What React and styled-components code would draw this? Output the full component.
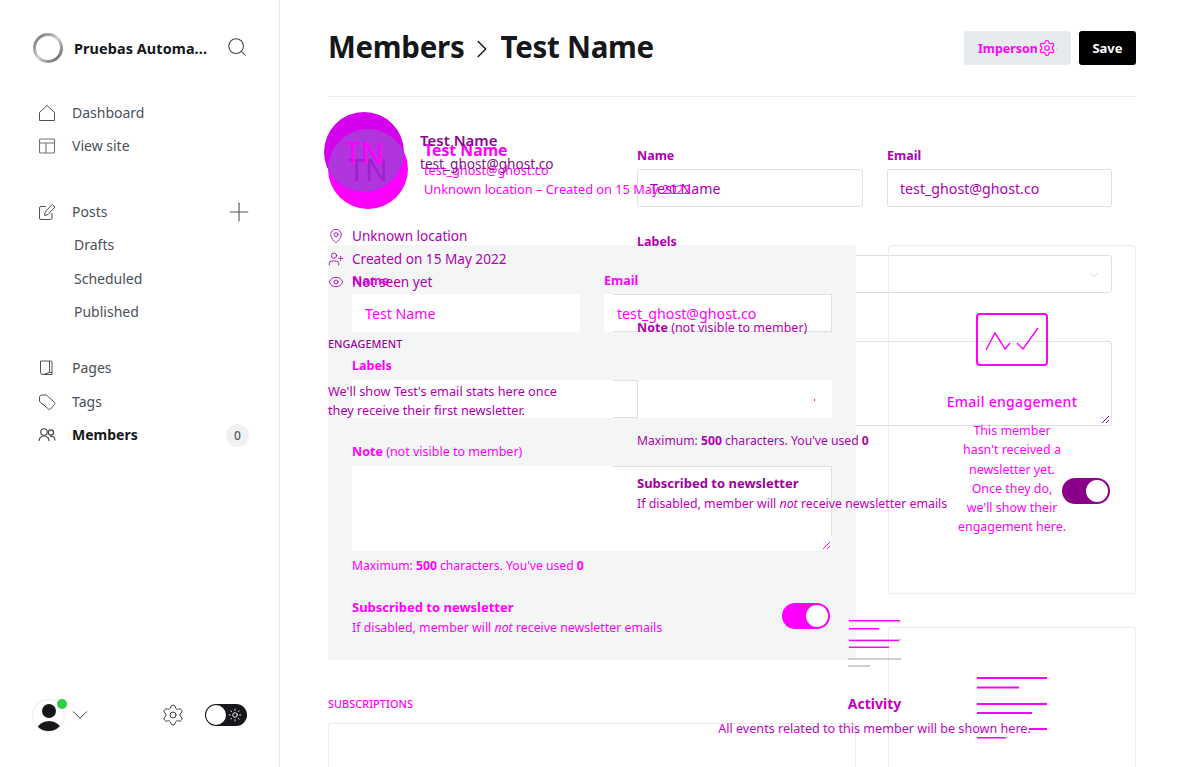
import React from "react";
import styled, { createGlobalStyle } from "styled-components";
import { Search, Plus, ChevronDown, ChevronRight, Settings, Sun, MapPin, UserPlus, Eye } from "lucide-react";

const FONT = `"Noto Sans", "Open Sans", "Liberation Sans", sans-serif`;

const Global = createGlobalStyle`
  html, body { margin: 0; padding: 0; height: 100%; overflow: hidden; background: #fff; }
  body { font-family: ${FONT}; color: #15171a; }
  * { box-sizing: border-box; }
`;

const Page = styled.div`display: flex; width: 1184px; height: 767px; overflow: hidden; background: #fff;`;

/* ---------- sidebar ---------- */
const Sidebar = styled.aside`
  flex: 0 0 280px; height: 100%; border-right: 1px solid #e6e9eb;
  padding: 32px 31px 36px 32px; display: flex; flex-direction: column;
`;
const Brand = styled.div`display: flex; align-items: center; height: 32px; gap: 10px;`;
const BrandName = styled.div`
  flex: 1; font-size: 14.4px; font-weight: 700; color: #15171a; letter-spacing: .1px; white-space: nowrap;
`;
const BrandSearch = styled.span`display: flex; color: #394047; margin: -2px 0 0 0;`;
const NavGroup = styled.nav`display: flex; flex-direction: column; margin-top: ${p => p.$gap}px;`;
const NavRow = styled.div`
  display: flex; align-items: center; height: 33.5px; padding-left: ${p => p.$sub ? 42 : 6}px; gap: 16px;
  font-size: 14px; font-weight: ${p => p.$active ? 700 : 400}; color: ${p => p.$active ? "#15171a" : "#4b5158"};
  svg { flex: none; }
`;
const NavLabel = styled.span`flex: 1; line-height: 20px;`;
const Count = styled.span`
  width: 23px; height: 23px; border-radius: 50%; background: #eff1f3; color: #525b64; margin-right: -1px;
  display: flex; align-items: center; justify-content: center; font-size: 12px; font-weight: 500;
`;
const PlusMark = styled.span`display: flex; color: #4b5158; margin-right: -6px;`;
const Foot = styled.div`margin-top: auto; display: flex; align-items: center; height: 32px;`;
const UserAvatar = styled.div`
  position: relative; width: 33px; height: 33px; border-radius: 50%; border: 1px solid #ececec; overflow: hidden; background: #fff;
`;
const UserWrap = styled.div`position: relative; width: 33px; height: 33px;`;
const Online = styled.span`
  position: absolute; right: -2px; top: 0; width: 10px; height: 10px; border-radius: 50%; background: #30cf43;
`;
const FootChevron = styled.span`display: flex; color: #394047; margin-left: 2px; flex: 1;`;
const FootGear = styled.span`display: flex; color: #394047; margin-right: 20px;`;
const Night = styled.div`
  width: 42px; height: 22px; border-radius: 11px; background: #15171a; display: flex; align-items: center;
  justify-content: space-between; padding: 0 5px 0 1px; color: #fff; margin-right: 1px;
`;
const NightKnob = styled.span`width: 20px; height: 20px; border-radius: 50%; background: #fff;`;

/* ---------- main ---------- */
const Main = styled.main`flex: 1; padding: 0 48px; height: 100%; overflow: hidden; min-width: 0;`;
const Header = styled.header`
  height: 97px; border-bottom: 1px solid #eceef0; display: flex; align-items: center; justify-content: space-between;
`;
const Crumbs = styled.div`
  display: flex; align-items: center; font-size: 29.5px; font-weight: 700; color: #15171a; margin: -4px 0 0 0; letter-spacing: -.28px;
  svg { margin: 5px 3px 0 3px; color: #15171a; }
`;
const Actions = styled.div`display: flex; gap: 8px;`;
const GhostButton = styled.button`
  position: relative; width: 107px; height: 34px; border: 0; border-radius: 3px; background: #e8ebee; color: #f0f;
  font: 700 12.4px ${FONT}; text-align: left; padding: 0 0 0 14px; white-space: nowrap;
`;
const GearOver = styled.span`
  position: absolute; left: 73px; top: 7px; width: 20px; height: 20px; display: flex; align-items: center; justify-content: center;
  color: #f0f; background: #e8ebee;
`;
const SaveButton = styled.button`
  width: 57px; height: 34px; border: 0; border-radius: 3px; background: #000; color: #fff; font: 700 13px ${FONT}; padding: 0;
`;

const Stack = styled.div`display: grid; > * { grid-area: 1 / 1; }`;

/* layer drawn with the darker tone */
const LayerA = styled.div`display: flex; align-items: flex-start; padding-top: 15px; min-width: 0;`;
const AsideA = styled.div`
  flex: 0 0 309px; z-index: 2; position: relative; display: flex; flex-direction: column;
`;
const IdA = styled.div`display: flex; margin-left: -4px; gap: 16px;`;
const AvatarA = styled.div`
  position: relative; flex: none; width: 80px; height: 80px; border-radius: 50%; overflow: hidden; background: #d400ee;
  display: flex; align-items: center; justify-content: center; color: #f0f; font-size: 30px;
`;
const AvatarOverlap = styled.div`
  position: absolute; left: 4px; top: 17px; width: 80px; height: 80px; border-radius: 50%; background: #b035dd;
  display: flex; align-items: center; justify-content: center; color: #a020d0; font-size: 30px;
`;
const AvatarTop = styled.span`position: relative; z-index: 1;`;
const IdTextA = styled.div`display: flex; flex-direction: column; padding-top: 18px; white-space: nowrap;`;
const NameA = styled.div`font-size: 15px; font-weight: 600; line-height: 20px; color: #8b0a8b; padding-bottom: 4px;`;
const MailA = styled.div`font-size: 13.6px; line-height: 20px; color: #7a1a7a;`;
const Facts = styled.div`display: flex; flex-direction: column; margin-top: 32px;`;
const Fact = styled.div`
  display: flex; align-items: center; gap: 8px; height: 23px; font-size: 13.6px; color: #b000b0;
  svg { flex: none; }
`;
const SectionHead = styled.div`
  font-size: 10.8px; font-weight: 500; text-transform: uppercase; color: ${p => p.$c}; letter-spacing: .1px; line-height: 14px;
  margin-top: ${p => p.$mt || 0}px;
`;
const EngageNote = styled.div`font-size: 12.7px; line-height: 19px; color: #b000b0; margin-top: 31px;`;

const FormA = styled.div`flex: 0 0 475px; display: flex; flex-direction: column; padding-top: 35px;`;
const Cols = styled.div`display: grid; grid-template-columns: ${p => p.$cols}; gap: 24px;`;
const Field = styled.div`display: flex; flex-direction: column; margin-top: ${p => p.$mt || 0}px;`;
const LabelA = styled.label`
  z-index: 2; font-size: 12.5px; font-weight: 700; line-height: 18px; color: #b000b0; margin-bottom: 4px;
  span { font-weight: 400; }
`;
const BoxA = styled.div`
  position: relative; z-index: 0; height: ${p => p.$h || 38}px; background: #fff; border: 1px solid #dde1e5; border-radius: 3px;
  padding: 0 12px; display: flex; align-items: center; font-size: 14.2px; color: #b000b0;
`;
const SelectArrow = styled.span`position: absolute; right: 10px; top: 12px; display: flex; color: #bdbdbd;`;
const Grip = styled.svg`position: absolute; right: 1px; bottom: 1px;`;
const HintA = styled.div`
  z-index: 2; font-size: 12.15px; line-height: 18px; color: #b000b0; margin-top: 6px; b { font-weight: 700; }
`;
const ToggleRowA = styled.div`
  z-index: 2; display: flex; align-items: center; justify-content: space-between; padding-right: 2px; margin-top: 24px; white-space: nowrap;
`;
const ToggleText = styled.div`display: flex; flex-direction: column;`;
const ToggleTitle = styled.div`font-size: 13px; font-weight: 700; line-height: 18px; color: ${p => p.$c};`;
const ToggleSub = styled.div`font-size: 12.35px; line-height: 18px; margin-top: 3px; color: ${p => p.$c}; i { font-style: italic; }`;
const ToggleSlot = styled.div`margin-top: ${p => p.$mt}px;`;
const Toggle = styled.div`
  flex: none; width: 48px; height: 26px; border-radius: 13px; background: ${p => p.$c}; display: flex; align-items: center;
  justify-content: flex-end; padding-right: 2px;
`;
const Knob = styled.span`width: 22px; height: 22px; border-radius: 50%; background: #fff;`;

const ActivityA = styled.div`
  z-index: 2; display: flex; flex-direction: column; align-items: center; margin-top: 107px;
`;
const ActivityTitle = styled.div`font-size: 14px; font-weight: 700; line-height: 20px; color: #c000c8; margin-top: 27px;`;
const ActivityText = styled.div`font-size: 12.6px; line-height: 20px; color: #c800c8; margin-top: 5px; white-space: nowrap;`;

/* layer drawn in full magenta */
const LayerB = styled.div`
  z-index: 1; display: flex; gap: 32px; padding-top: 32px; align-items: flex-start; color: #f0f; pointer-events: none; min-width: 0;
`;
const MainB = styled.div`flex: 0 0 528px; display: flex; flex-direction: column;`;
const IdB = styled.div`display: flex; gap: 16px; height: 80px;`;
const AvatarB = styled.div`flex: none; width: 80px; height: 80px; border-radius: 50%; background: #f0f;`;
const IdTextB = styled.div`display: flex; flex-direction: column; padding-top: 10px; white-space: nowrap;`;
const NameB = styled.div`font-size: 15.8px; font-weight: 700; line-height: 22px;`;
const MailB = styled.div`font-size: 12.7px; line-height: 18px;`;
const MetaB = styled.div`font-size: 12.8px; line-height: 20px; margin-top: 0;`;

const Panel = styled.div`
  margin-top: 36px; height: 415px; background: #f4f6f6; border-radius: 3px; padding: 27px 24px 0; display: flex; flex-direction: column;
`;
const LabelB = styled.label`
  font-size: 12.5px; font-weight: 700; line-height: 18px; margin-bottom: ${p => p.$mb || 5}px;
  span { font-weight: 400; }
`;
/* white boxes: only the stretch named by the props keeps a visible edge */
const BoxB = styled.div`
  position: relative; height: ${p => p.$h || 38}px; background-color: #fff; border-radius: 2px; padding: 0 13px;
  display: flex; align-items: center; font-size: 14.2px; color: #f0f;
`;
const Edge = styled.span`
  position: absolute; left: ${p => p.$l}px; top: ${p => p.$t}px; width: ${p => p.$w}px; height: ${p => p.$hh}px; background: #dde1e5;
`;
const SpotArrow = styled.span`position: absolute; right: 17px; top: 19px; width: 1px; height: 2px; background: #f0f;`;
const HintB = styled.div`font-size: 12.15px; line-height: 18px; margin-top: 6px; b { font-weight: 700; }`;
const ToggleRowB = styled.div`
  display: flex; align-items: center; justify-content: space-between; padding-right: 2px; margin-top: 23px; white-space: nowrap;
`;
const SubsHead = styled.div`margin-top: 37px;`;
const SubsCard = styled.div`margin-top: 12px; height: 120px; border: 1px solid #ececec; border-radius: 3px 3px 0 0;`;

const SideB = styled.div`flex: 0 0 248px; display: flex; flex-direction: column; gap: 33px; padding-top: 116px;`;
const Card = styled.div`
  flex: none; height: ${p => p.$h}px; border: 1px solid #ececec; border-radius: 3px; display: flex; flex-direction: column; align-items: center;
  padding-top: ${p => p.$pt}px;
`;
const EngageTitle = styled.div`font-size: 14px; font-weight: 500; line-height: 20px; margin-top: 26px; letter-spacing: .3px;`;
const EngageBody = styled.div`font-size: 12.45px; line-height: 19.3px; text-align: center; margin-top: 9px;`;

const House = () => (
  <svg width="18" height="18" viewBox="0 0 18 18" fill="none" stroke="#4b5158" strokeWidth="1"><path d="M1.5 8.5 9 1.5l7.5 7v8h-15z" strokeLinejoin="round"/></svg>
);
const Layout = () => (
  <svg width="18" height="18" viewBox="0 0 18 18" fill="none" stroke="#6b7580" strokeWidth="1.1"><rect x="1.5" y="2" width="15" height="14" rx="1"/><path d="M1.5 6h15M8 6v10"/></svg>
);
const Compose = () => (
  <svg width="18" height="18" viewBox="0 0 18 18" fill="none" stroke="#4b5158" strokeWidth="1"><path d="M8 3.5H3A1.5 1.5 0 0 0 1.500 5v10A1.500 1.500 0 0 0 3 16.500h9.500A1.500 1.500 0 0 0 14 15v-5"/><path d="M14 1.500 17 4l-7 7.500-3.500 1 .8-3.500z" strokeLinejoin="round"/></svg>
);
const Book = () => (
  <svg width="18" height="18" viewBox="0 0 18 18" fill="none" stroke="#4b5158" strokeWidth="1"><path d="M2.500 2h10.500a1 1 0 0 1 1 1v12.500H5a2.500 2.500 0 0 1-2.500-2.500z" strokeLinejoin="round"/><path d="M11.500 2v11.500H14M5 15.500l6.500-2"/></svg>
);
const Tag = () => (
  <svg width="18" height="18" viewBox="0 0 18 18" fill="none" stroke="#4b5158" strokeWidth="1"><path d="M1.500 3.500 3 2h5.500l8 7.500a1.500 1.500 0 0 1 0 2l-4 4.500a1.500 1.500 0 0 1-2 0L1.500 8.500z" strokeLinejoin="round"/></svg>
);
const People = () => (
  <svg width="18" height="18" viewBox="0 0 18 18" fill="none" stroke="#394047" strokeWidth="1.1"><circle cx="6" cy="6" r="3.300"/><path d="M1 15c0-3 2-5 5-5s5 2 5 5"/><circle cx="13" cy="6.500" r="2.600"/><path d="M12 10.300c3-.5 5 1.500 5 4.200"/></svg>
);
const Ring = () => (
  <svg width="32" height="32" viewBox="0 0 32 32" fill="none">
    <defs><linearGradient id="rg" x1="0" y1="0" x2="1" y2="1"><stop offset="0" stopColor="#6f6f6f"/><stop offset=".5" stopColor="#cfcfcf"/><stop offset="1" stopColor="#5a5a5a"/></linearGradient></defs>
    <circle cx="16" cy="16" r="13.500" stroke="url(#rg)" strokeWidth="3"/>
  </svg>
);
const Person = () => (
  <svg width="31" height="31" viewBox="0 0 31 31"><circle cx="16" cy="11" r="7" fill="#15171a"/><ellipse cx="16" cy="30" rx="12" ry="9" fill="#15171a"/></svg>
);
const GripMark = ({ c }) => (
  <Grip width="9" height="9" viewBox="0 0 9 9" stroke={c} strokeWidth="1"><path d="M1 8 8 1M5 8l3-3"/></Grip>
);
const Envelope = () => (
  <svg width="72" height="53" viewBox="0 0 72 53" fill="none" stroke="#f0f">
    <rect x="1" y="1" width="70" height="51" rx="3" strokeWidth="2"/>
    <path d="M10 37 19 20l7 11M26 31l3 5 5-6M41 30l6 6 15-21" strokeWidth="1.400"/>
  </svg>
);
const LinesB = () => (
  <svg width="70" height="62" viewBox="0 0 70 62" fill="#f0f">
    <rect x="0" y="0" width="70" height="2"/><rect x="0" y="9.500" width="42" height="2"/>
    <rect x="0" y="26" width="70" height="2"/><rect x="0" y="35" width="55" height="2"/>
    <rect x="52" y="51" width="18" height="2"/><rect x="0" y="60" width="29" height="1.500"/>
  </svg>
);
const LinesA = () => (
  <svg width="53" height="47" viewBox="0 0 53 47">
    <rect x="1" y="1" width="52" height="1.500" fill="#d0d0d0"/><rect x="1" y="0" width="51" height="1.200" fill="#f0f"/>
    <rect x="1" y="8" width="30" height="1.500" fill="#f0f"/>
    <rect x="0" y="19" width="53" height="1.500" fill="#c9c9c9"/><rect x="1" y="20" width="50" height="1.200" fill="#f0f"/>
    <rect x="1" y="26.500" width="40" height="1.500" fill="#f0f"/>
    <rect x="0" y="38" width="53" height="2" fill="#cfcfcf"/><rect x="0" y="45" width="22" height="2" fill="#cfcfcf"/>
  </svg>
);

const navTop = [["Dashboard", <House key="a" />], ["View site", <Layout key="b" />]];
const navBottom = [["Pages", <Book key="a" />], ["Tags", <Tag key="b" />]];

export default function App() {
  return (
    <>
      <Global />
      <Page>
        <Sidebar>
          <Brand>
            <Ring />
            <BrandName>Pruebas Automa...</BrandName>
            <BrandSearch><Search size={22} strokeWidth={1.1} /></BrandSearch>
          </Brand>
          <NavGroup $gap={32}>
            {navTop.map(([t, i]) => <NavRow key={t}>{i}<NavLabel>{t}</NavLabel></NavRow>)}
          </NavGroup>
          <NavGroup $gap={32}>
            <NavRow><Compose /><NavLabel>Posts</NavLabel><PlusMark><Plus size={30} strokeWidth={0.9} /></PlusMark></NavRow>
            {["Drafts", "Scheduled", "Published"].map(t => <NavRow $sub key={t}><NavLabel>{t}</NavLabel></NavRow>)}
          </NavGroup>
          <NavGroup $gap={22.6}>
            {navBottom.map(([t, i]) => <NavRow key={t}>{i}<NavLabel>{t}</NavLabel></NavRow>)}
            <NavRow $active><People /><NavLabel>Members</NavLabel><Count>0</Count></NavRow>
          </NavGroup>
          <Foot>
            <UserWrap>
              <UserAvatar><Person /></UserAvatar>
              <Online />
            </UserWrap>
            <FootChevron><ChevronDown size={26} strokeWidth={0.9} /></FootChevron>
            <FootGear><Settings size={24} strokeWidth={1} /></FootGear>
            <Night><NightKnob /><Sun size={14} strokeWidth={1.500} /></Night>
          </Foot>
        </Sidebar>

        <Main>
          <Header>
            <Crumbs>Members<ChevronRight size={30} strokeWidth={1.200} />Test Name</Crumbs>
            <Actions>
              <GhostButton>Impersonate<GearOver><Settings size={18} strokeWidth={1.500} /></GearOver></GhostButton>
              <SaveButton>Save</SaveButton>
            </Actions>
          </Header>

          <Stack>
            <LayerA>
              <AsideA>
                <IdA>
                  <AvatarA>
                    <AvatarOverlap>TN</AvatarOverlap>
                    <AvatarTop>TN</AvatarTop>
                  </AvatarA>
                  <IdTextA>
                    <NameA>Test Name</NameA>
                    <MailA>test_ghost@ghost.co</MailA>
                  </IdTextA>
                </IdA>
                <Facts>
                  <Fact><MapPin size={16} strokeWidth={1.300} />Unknown location</Fact>
                  <Fact><UserPlus size={16} strokeWidth={1.300} />Created on 15 May 2022</Fact>
                  <Fact><Eye size={16} strokeWidth={1.300} />Not seen yet</Fact>
                </Facts>
                <SectionHead $c="#a000a0" $mt={44}>Engagement</SectionHead>
                <EngageNote>We'll show Test's email stats here once<br />they receive their first newsletter.</EngageNote>
              </AsideA>
              <FormA>
                <Cols $cols="226px 225px">
                  <Field><LabelA>Name</LabelA><BoxA>Test Name</BoxA></Field>
                  <Field><LabelA>Email</LabelA><BoxA>test_ghost@ghost.co</BoxA></Field>
                </Cols>
                <Field $mt={26}>
                  <LabelA>Labels</LabelA>
                  <BoxA><SelectArrow><ChevronDown size={14} strokeWidth={1.100} /></SelectArrow></BoxA>
                </Field>
                <Field $mt={26}>
                  <LabelA>Note <span>(not visible to member)</span></LabelA>
                  <BoxA $h={85}><GripMark c="#a000a0" /></BoxA>
                </Field>
                <HintA>Maximum: <b>500</b> characters. You've used <b>0</b></HintA>
                <ToggleRowA>
                  <ToggleText>
                    <ToggleTitle $c="#a000a0">Subscribed to newsletter</ToggleTitle>
                    <ToggleSub $c="#c000c0">If disabled, member will <i>not</i> receive newsletter emails</ToggleSub>
                  </ToggleText>
                  <ToggleSlot $mt={-6}><Toggle $c="#8b008b"><Knob /></Toggle></ToggleSlot>
                </ToggleRowA>
                <ActivityA>
                  <LinesA />
                  <ActivityTitle>Activity</ActivityTitle>
                  <ActivityText>All events related to this member will be shown here.</ActivityText>
                </ActivityA>
              </FormA>
            </LayerA>

            <LayerB>
              <MainB>
                <IdB>
                  <AvatarB />
                  <IdTextB>
                    <NameB>Test Name</NameB>
                    <MailB>test_ghost@ghost.co</MailB>
                    <MetaB>Unknown location – Created on 15 May 2022</MetaB>
                  </IdTextB>
                </IdB>
                <Panel>
                  <Cols $cols="228px 228px">
                    <Field>
                      <LabelB $mb={4}>Name</LabelB>
                      <BoxB>Test Name</BoxB>
                    </Field>
                    <Field>
                      <LabelB $mb={4}>Email</LabelB>
                      <BoxB>test_ghost@ghost.co
                        <Edge $l={9} $t={0} $w={219} $hh={1} />
                        <Edge $l={9} $t={37} $w={219} $hh={1} />
                        <Edge $l={227} $t={0} $w={1} $hh={38} />
                      </BoxB>
                    </Field>
                  </Cols>
                  <Field $mt={25}>
                    <LabelB $mb={5}>Labels</LabelB>
                    <BoxB>
                      <Edge $l={261} $t={0} $w={24} $hh={1} />
                      <Edge $l={261} $t={37} $w={24} $hh={1} />
                      <Edge $l={285} $t={0} $w={1} $hh={38} />
                      <SpotArrow />
                    </BoxB>
                  </Field>
                  <Field $mt={25}>
                    <LabelB $mb={5}>Note <span>(not visible to member)</span></LabelB>
                    <BoxB $h={85}>
                      <Edge $l={261} $t={0} $w={219} $hh={1} />
                      <Edge $l={479} $t={0} $w={1} $hh={70} />
                      <GripMark c="#f0f" />
                    </BoxB>
                  </Field>
                  <HintB>Maximum: <b>500</b> characters. You've used <b>0</b></HintB>
                  <ToggleRowB>
                    <ToggleText>
                      <ToggleTitle $c="#f0f">Subscribed to newsletter</ToggleTitle>
                      <ToggleSub $c="#f0f">If disabled, member will <i>not</i> receive newsletter emails</ToggleSub>
                    </ToggleText>
                    <ToggleSlot $mt={-3}><Toggle $c="#f0f"><Knob /></Toggle></ToggleSlot>
                  </ToggleRowB>
                </Panel>
                <SubsHead><SectionHead $c="#f0f">Subscriptions</SectionHead></SubsHead>
                <SubsCard />
              </MainB>
              <SideB>
                <Card $h={349} $pt={67}>
                  <Envelope />
                  <EngageTitle>Email engagement</EngageTitle>
                  <EngageBody>This member<br />hasn't received a<br />newsletter yet.<br />Once they do,<br />we'll show their<br />engagement here.</EngageBody>
                </Card>
                <Card $h={180} $pt={49}>
                  <LinesB />
                </Card>
              </SideB>
            </LayerB>
          </Stack>
        </Main>
      </Page>
    </>
  );
}
